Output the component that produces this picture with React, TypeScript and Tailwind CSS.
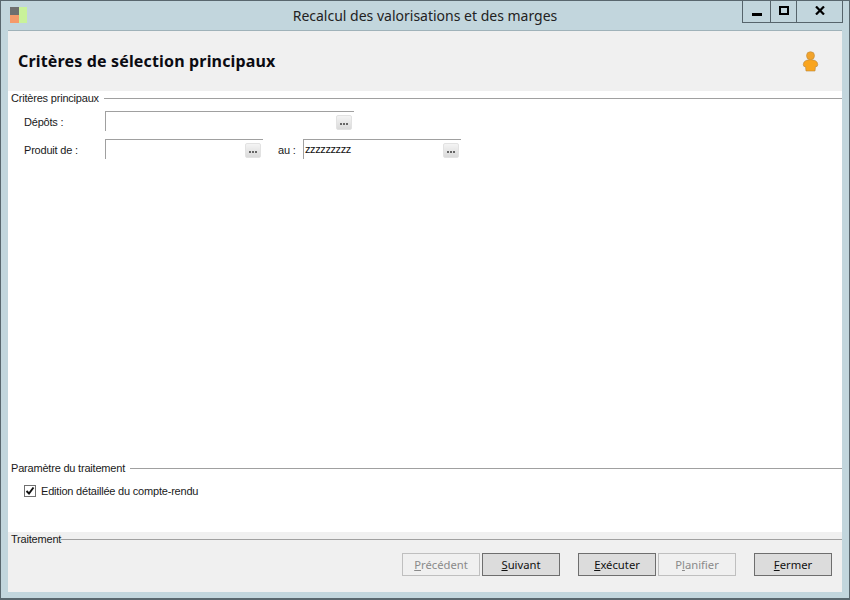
import { ReactNode } from 'react';

const FONT = "font-['Liberation_Sans',Arial,sans-serif]";

function GroupTitle({ label, lineClass }: { label: string; lineClass?: string }) {
  return (
    <div className="flex items-center h-[14px]">
      <span className="text-[11px] leading-[14px] text-[#1a1a1a] whitespace-nowrap tracking-[-0.2px]">{label}</span>
      <div className={`flex-1 h-px bg-[#a0a0a0] ${lineClass ?? 'ml-[5px]'}`} />
    </div>
  );
}

function PickerButton() {
  return (
    <div className="w-[16px] h-[15px] rounded-[2px] border border-[#e2e2e2] bg-gradient-to-b from-[#f4f4f4] to-[#dadada] flex items-center justify-center gap-px pt-[2px] shrink-0">
      <span className="w-[2px] h-[2px] bg-[#666]" />
      <span className="w-[2px] h-[2px] bg-[#666]" />
      <span className="w-[2px] h-[2px] bg-[#666]" />
    </div>
  );
}

function Field({ width, value }: { width: string; value?: string }) {
  return (
    <div className={`${width} h-[20px] flex items-start`}>
      <div className="flex-1 h-full border-t border-l border-[#a0a0a0] flex justify-between pl-px pr-[2px]">
        <span className="text-[11px] leading-[14px] text-[#111] mt-[2px] tracking-[-0.4px]">{value}</span>
        <div className="mt-[3px]">
          <PickerButton />
        </div>
      </div>
    </div>
  );
}

function FormLabel({ children, width }: { children: ReactNode; width: string }) {
  return <span className={`${width} text-[11px] leading-[14px] text-[#1a1a1a] shrink-0 tracking-[-0.2px]`}>{children}</span>;
}

function ActionButton({ hot, rest, lead, disabled, width = 'w-[78px]' }: { hot: string; rest: string; lead?: string; disabled?: boolean; width?: string }) {
  return (
    <button
      type="button"
      className={`${width} h-[23px] border font-['Noto_Sans',sans-serif] text-[11.25px] leading-[20px] ${
        disabled ? 'border-[#bfbfbf] bg-[#f0f0f0] text-[#8a8a8a]' : 'border-[#6e6e6e] bg-[#dcdcdc] text-[#111]'
      }`}
    >
      {lead}
      <span className="underline">{hot}</span>
      {rest}
    </button>
  );
}

export default function App() {
  return (
    <div className={`${FONT} w-[850px] h-[600px] bg-[#c2d6dd] border border-[#59676e] border-b-2 flex flex-col overflow-hidden`}>
      {/* Title bar */}
      <div className="h-[29px] flex shrink-0">
        <div className="w-[9px] shrink-0" />
        <svg width="17" height="16" viewBox="0 0 17 16" className="mt-[6px] shrink-0">
          <rect x="0" y="0" width="9" height="8" fill="#6f6f6f" />
          <rect x="0" y="8" width="9" height="8" fill="#f59a6a" />
          <rect x="9" y="0" width="8" height="16" fill="#c9f29a" />
        </svg>
        <div className="flex-1 text-center text-[14px] leading-[18px] pt-[6px] text-[#222] font-['Noto_Sans',sans-serif] ml-[14px] pr-[8px]">
          Recalcul des valorisations et des marges
        </div>
        <div className="w-[101px] h-[22px] mr-[6px] flex border-x border-b border-[#56646b] -ml-[75px] shrink-0 relative">
          <div className="w-[28px] border-r border-[#56646b] flex items-end justify-center pb-[6px]">
            <div className="w-[10px] h-[3px] bg-black" />
          </div>
          <div className="w-[26px] border-r border-[#56646b] flex items-center justify-center pb-[2px]">
            <div className="w-[10px] h-[9px] border-2 border-black" />
          </div>
          <div className="flex-1 flex items-center justify-center pb-[2px]">
            <svg width="10" height="9" viewBox="0 0 10 9">
              <path d="M1 0.5 L9 8.5 M9 0.5 L1 8.5" stroke="#000" strokeWidth="2.2" />
            </svg>
          </div>
        </div>
      </div>

      {/* Client area */}
      <div className="flex-1 mx-[7px] mb-[6px] border-t border-[#9fb2b9] flex flex-col">
        {/* Header */}
        <div className="h-[60px] bg-[#f0f0f0] flex items-center justify-between pl-[10px] pr-[23px] shrink-0">
          <h1 className="font-['Noto_Sans',sans-serif] font-bold text-[16px] leading-[20px] tracking-[0.16px] text-[#0b0b12] mb-[1px]">Critères de sélection principaux</h1>
          <svg width="17" height="21" viewBox="0 0 17 21" className="mt-[1px]">
            <path d="M4 9.5 Q8.5 7.5 13 9.5 L15 11 Q16.5 14 15 15.5 L13.5 15.5 L13 20 L4 20 L3.5 15.5 L2 15.5 Q0.5 14 2 11 Z" fill="#f9a51f" stroke="#b8863e" strokeWidth="0.6" />
            <circle cx="8.5" cy="4.7" r="4" fill="#f2a32a" stroke="#c08a3a" strokeWidth="0.6" />
          </svg>
        </div>

        {/* Main selection */}
        <div className="flex-1 bg-white flex flex-col">
          <div className="pl-[3px]">
            <GroupTitle label="Critères principaux" />
          </div>
          <div className="pl-[16px] mt-[6px] flex items-start">
            <FormLabel width="w-[81px] mt-[4px]">Dépôts :</FormLabel>
            <Field width="w-[249px]" />
          </div>
          <div className="pl-[16px] mt-[8px] flex items-start">
            <FormLabel width="w-[81px] mt-[4px]">Produit de :</FormLabel>
            <Field width="w-[158px]" />
            <span className="ml-[15px] w-[25px] mt-[4px] text-[11px] leading-[14px] text-[#1a1a1a] tracking-[-0.2px]">au :</span>
            <Field width="w-[158px]" value="zzzzzzzzz" />
          </div>

          <div className="flex-1" />

          <div className="pl-[3px]">
            <GroupTitle label="Paramètre du traitement" />
          </div>
          <label className="pl-[16px] mt-[9px] flex items-center h-[14px]">
            <span className="w-[12px] h-[12px] border border-[#707070] bg-white flex items-center justify-center shrink-0">
              <svg width="10" height="10" viewBox="0 0 10 10">
                <path d="M1.5 5 L4 7.5 L8.5 1.5" fill="none" stroke="#111" strokeWidth="1.9" />
              </svg>
            </span>
            <span className="ml-[5px] text-[11px] leading-[14px] text-[#1a1a1a] tracking-[-0.2px]">Edition détaillée du compte-rendu</span>
          </label>
          <div className="h-[34px]" />
        </div>

        {/* Footer */}
        <div className="h-[60px] bg-[#f0f0f0] shrink-0 flex flex-col">
          <div className="pl-[3px]">
            <GroupTitle label="Traitement" lineClass="ml-0" />
          </div>
          <div className="flex justify-end pr-[10px] mt-[7px]">
            <ActionButton hot="P" rest="récédent" disabled />
            <div className="w-[2px]" />
            <ActionButton hot="S" rest="uivant" />
            <div className="w-[18px]" />
            <ActionButton hot="E" rest="xécuter" />
            <div className="w-[2px]" />
            <ActionButton lead="P" hot="l" rest="anifier" disabled />
            <div className="w-[18px]" />
            <ActionButton hot="F" rest="ermer" />
          </div>
        </div>
      </div>
    </div>
  );
}
